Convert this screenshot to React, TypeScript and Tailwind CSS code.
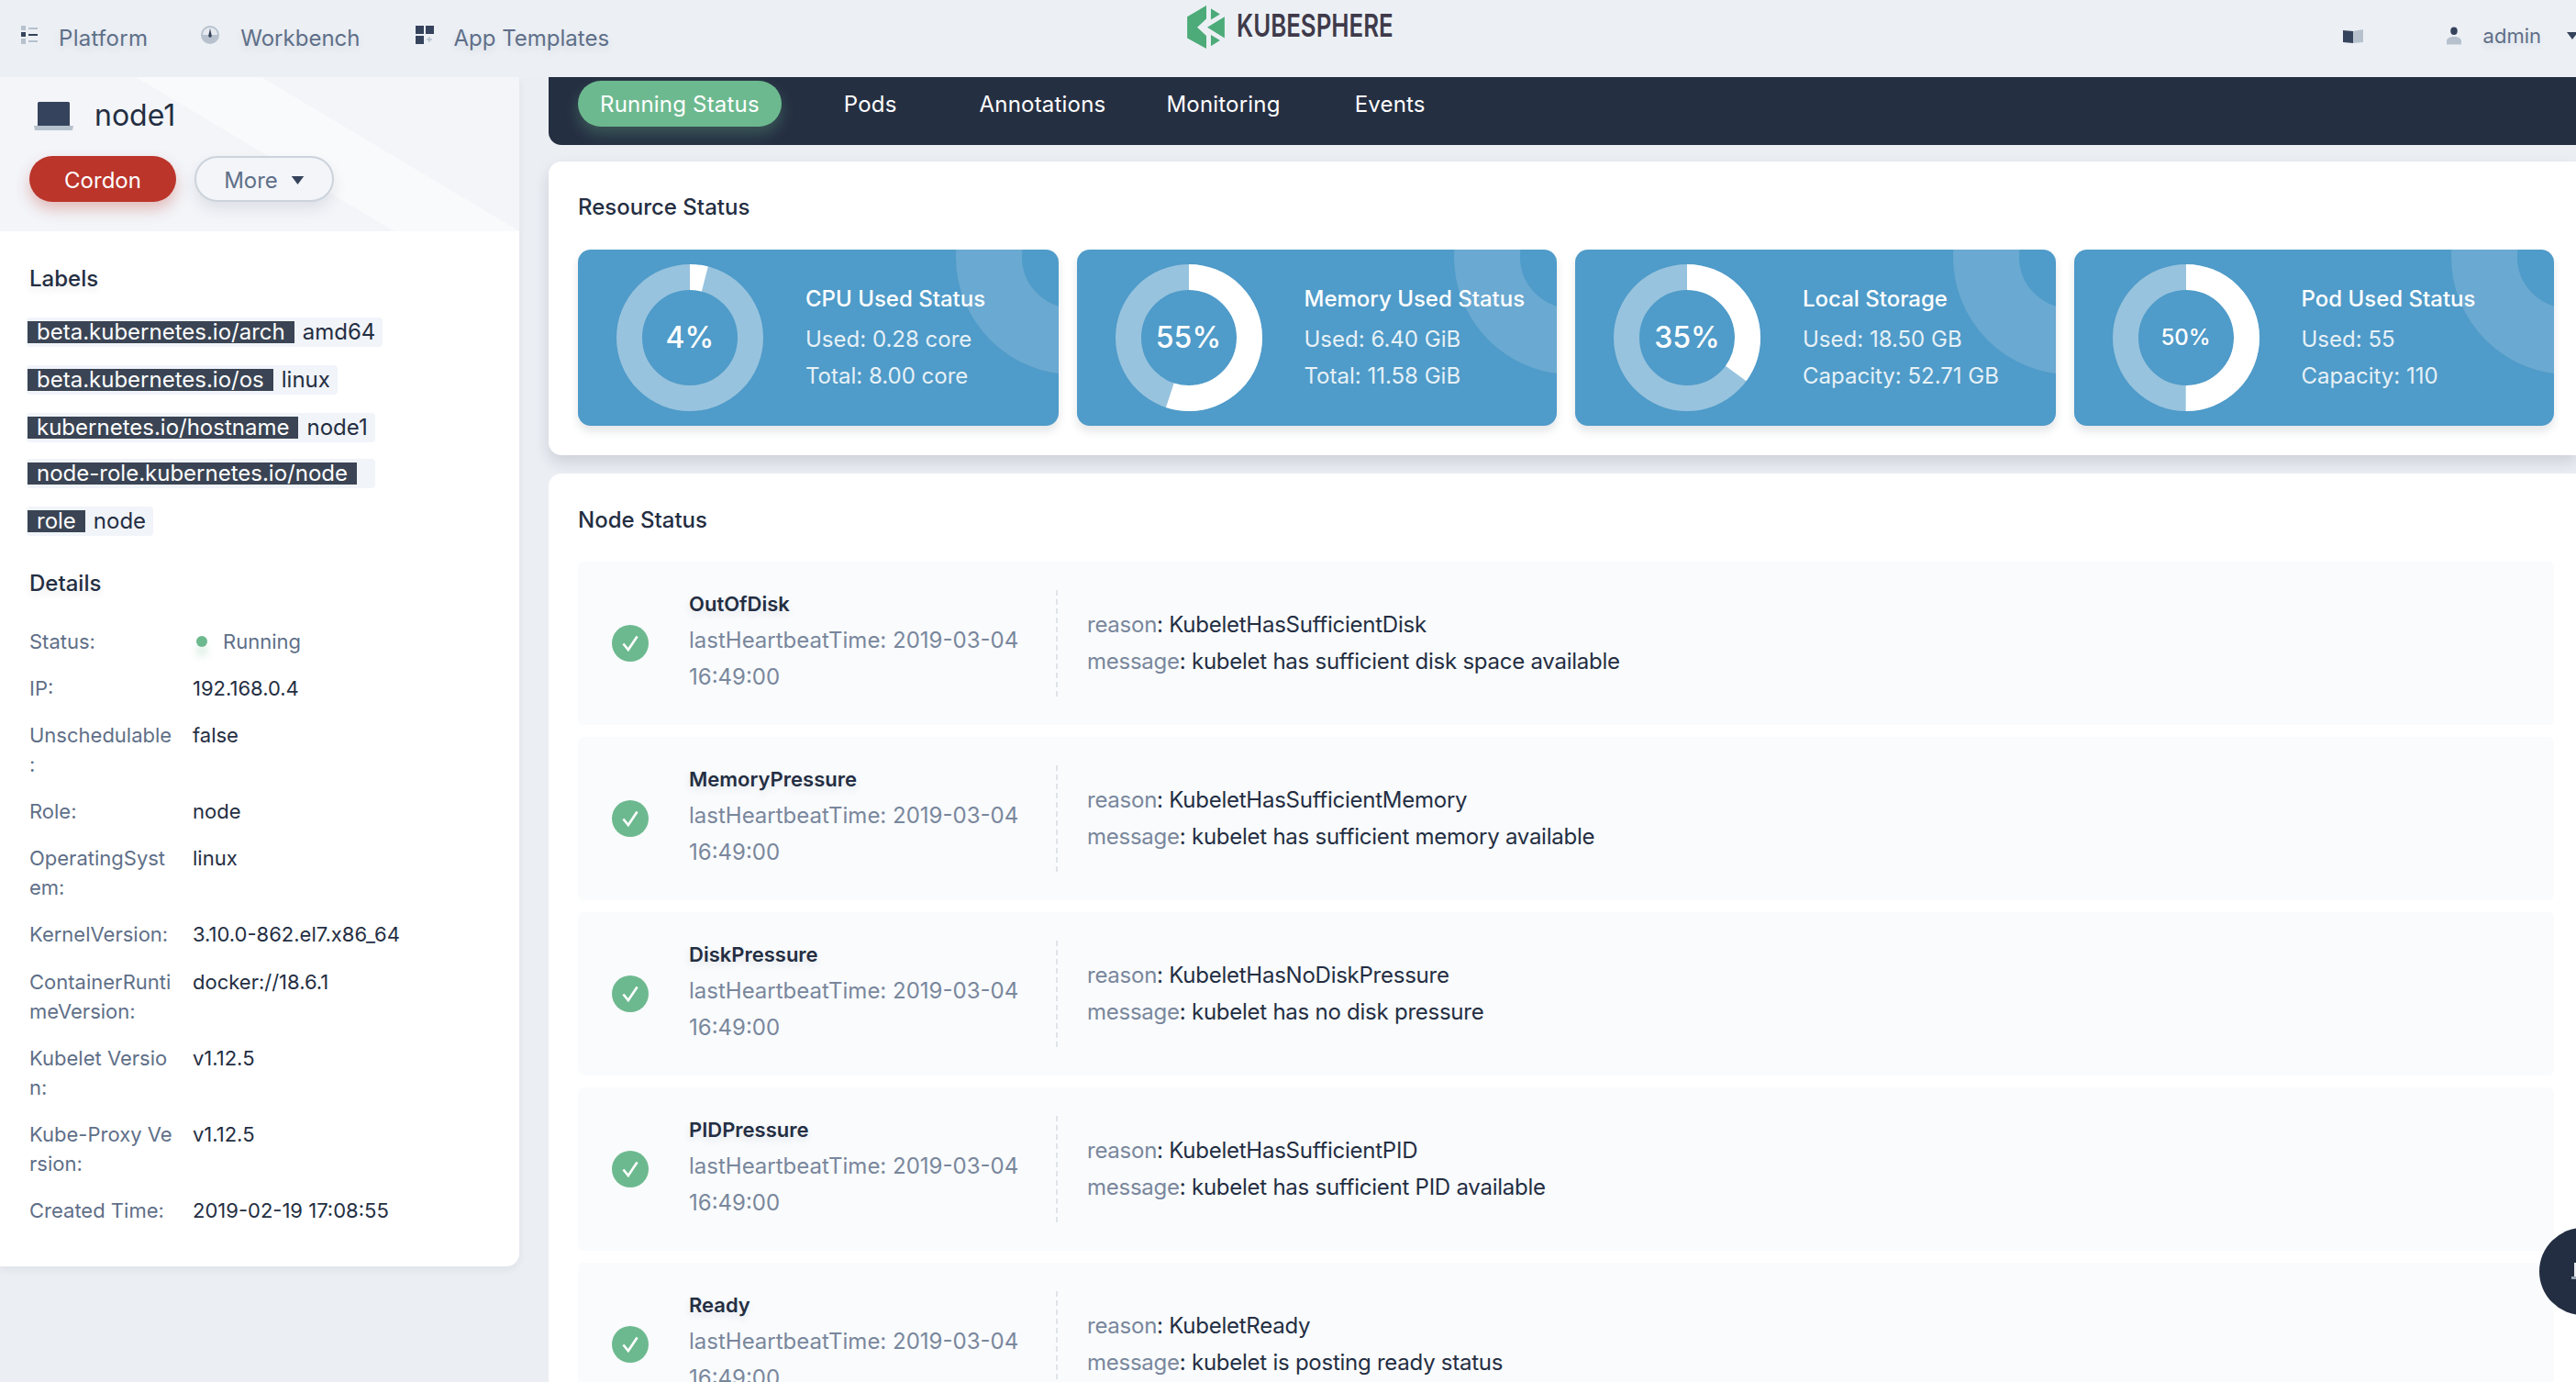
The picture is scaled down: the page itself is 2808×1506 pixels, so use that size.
import { Fragment, type ReactNode } from 'react';

const labels = [
  { k: 'beta.kubernetes.io/arch', v: 'amd64' },
  { k: 'beta.kubernetes.io/os', v: 'linux' },
  { k: 'kubernetes.io/hostname', v: 'node1' },
  { k: 'node-role.kubernetes.io/node', v: '' },
  { k: 'role', v: 'node' },
];

const details: { label: ReactNode; value: ReactNode }[] = [
  { label: 'Status:', value: <Running /> },
  { label: 'IP:', value: '192.168.0.4' },
  { label: <>Unschedulable<br />:</>, value: 'false' },
  { label: 'Role:', value: 'node' },
  { label: <>OperatingSyst<br />em:</>, value: 'linux' },
  { label: 'KernelVersion:', value: '3.10.0-862.el7.x86_64' },
  { label: <>ContainerRunti<br />meVersion:</>, value: 'docker://18.6.1' },
  { label: <>Kubelet Versio<br />n:</>, value: 'v1.12.5' },
  { label: <>Kube-Proxy Ve<br />rsion:</>, value: 'v1.12.5' },
  { label: 'Created Time:', value: '2019-02-19 17:08:55' },
];

const resources = [
  { pct: 4, text: '4%', title: 'CPU Used Status', a: 'Used: 0.28 core', b: 'Total: 8.00 core' },
  { pct: 55, text: '55%', title: 'Memory Used Status', a: 'Used: 6.40 GiB', b: 'Total: 11.58 GiB' },
  { pct: 35, text: '35%', title: 'Local Storage', a: 'Used: 18.50 GB', b: 'Capacity: 52.71 GB' },
  { pct: 50, text: '50%', title: 'Pod Used Status', a: 'Used: 55', b: 'Capacity: 110', small: true },
];

const conditions = [
  { name: 'OutOfDisk', reason: 'KubeletHasSufficientDisk', message: 'kubelet has sufficient disk space available' },
  { name: 'MemoryPressure', reason: 'KubeletHasSufficientMemory', message: 'kubelet has sufficient memory available' },
  { name: 'DiskPressure', reason: 'KubeletHasNoDiskPressure', message: 'kubelet has no disk pressure' },
  { name: 'PIDPressure', reason: 'KubeletHasSufficientPID', message: 'kubelet has sufficient PID available' },
  { name: 'Ready', reason: 'KubeletReady', message: 'kubelet is posting ready status' },
];

function Running() {
  return (
    <span className="flex items-center">
      <span className="ml-[4px] mr-[17px] h-[12px] w-[12px] rounded-full bg-[#6db98f] shadow-[0_10px_8px_rgba(109,185,143,0.25)]" />
      <span className="text-[#5f6f88]">Running</span>
    </span>
  );
}

function Caret({ className }: { className: string }) {
  return (
    <svg viewBox="0 0 12 8" className={className}>
      <path d="M0 0h12L6 8z" fill="currentColor" />
    </svg>
  );
}

function Laptop({ className }: { className: string }) {
  return (
    <svg viewBox="0 0 43 31" className={className}>
      <path d="M4 1.500A1.500 1.500 0 0 1 5.500 0h32A1.500 1.500 0 0 1 39 1.500V26H4z" fill="#36435c" />
      <path d="M0 26h43l-1 5H1z" fill="#b6c1cd" />
    </svg>
  );
}

function Donut({ pct, text, small }: { pct: number; text: string; small?: boolean }) {
  const r = 66;
  const c = 2 * Math.PI * r;
  return (
    <div className="relative h-[160px] w-[160px] shrink-0">
      <svg viewBox="0 0 160 160" className="h-full w-full -rotate-90">
        <circle cx="80" cy="80" r={r} fill="none" stroke="#97c3de" strokeWidth="28" />
        <circle cx="80" cy="80" r={r} fill="none" stroke="#ffffff" strokeWidth="28" strokeDasharray={`${(c * pct) / 100} ${c}`} />
      </svg>
      <div className={`absolute inset-0 flex items-center justify-center font-medium text-white ${small ? 'text-[24px]' : 'text-[32px]'}`}>
        {text}
      </div>
    </div>
  );
}

function ResourceCard({ pct, text, title, a, b, small }: (typeof resources)[number]) {
  return (
    <div className="relative flex h-[192px] items-center overflow-hidden rounded-[14px] bg-[#4f9bc9] pl-[42px] text-white shadow-[0_6px_10px_rgba(36,46,66,0.12)]">
      <div className="absolute -right-[144px] -top-[120px] h-[256px] w-[256px] rounded-full border-[72px] border-[#6aa9d1]" />
      <Donut pct={pct} text={text} small={small} />
      <div className="relative ml-[46px] text-[24px] leading-[40px]">
        <div className="mb-[4px] font-medium">{title}</div>
        <div className="text-[#e6f1f7]">{a}</div>
        <div className="text-[#e6f1f7]">{b}</div>
      </div>
    </div>
  );
}

function ConditionRow({ name, reason, message }: (typeof conditions)[number]) {
  return (
    <div className="flex h-[178px] shrink-0 items-center rounded-[6px] bg-[#f9fbfd] pl-[37px]">
      <div className="flex h-[40px] w-[40px] shrink-0 items-center justify-center rounded-full bg-[#6db98f]">
        <svg viewBox="0 0 24 24" className="h-[26px] w-[26px]" fill="none" stroke="#fff" strokeWidth="2.400">
          <path d="M5 12.500l5 6L19 5" />
        </svg>
      </div>
      <div className="-mt-[6px] ml-[44px] w-[400px] shrink-0 text-[24px] leading-[40px] text-[#79879c]">
        <div className="text-[22px] font-semibold text-[#242e42] [text-shadow:0_4px_8px_rgba(36,46,66,0.1)]">{name}</div>
        <div>lastHeartbeatTime: 2019-03-04</div>
        <div>16:49:00</div>
      </div>
      <div className="h-[116px] border-l-2 border-dashed border-[#dfe4ea]" />
      <div className="ml-[32px] text-[24px] leading-[40px] tracking-[-0.25px] text-[#242e42]">
        <div><span className="text-[#79879c]">reason</span>: {reason}</div>
        <div><span className="text-[#79879c]">message</span>: {message}</div>
      </div>
    </div>
  );
}

export default function App() {
  return (
    <div className="relative flex h-[1506px] flex-col overflow-hidden bg-[#ebeef3] font-['Inter',sans-serif] text-[#242e42]">
      {/* top nav */}
      <header className="relative flex h-[84px] shrink-0 items-center bg-[#ecf0f5] text-[24px] text-[#5f6f88] [text-shadow:0_4px_8px_rgba(36,46,66,0.1)]">
        <svg viewBox="0 0 18 20" className="-mt-[8px] ml-[23px] h-[20px] w-[18px]">
          <path d="M0 0h5v5H0zM0 14h5v6H0zM8 2h10v2H8zM8 16h10v2H8z" fill="#b6c1cd" />
          <path d="M0 7h5v5H0zM8 9h10v2H8z" fill="#36435c" />
        </svg>
        <span className="ml-[23px] tracking-[0.3px]">Platform</span>
        <svg viewBox="0 0 20 20" className="-mt-[8px] ml-[58px] h-[20px] w-[20px]">
          <circle cx="10" cy="10" r="10" fill="#b6c1cd" />
          <path d="M2 10a8 8 0 0 1 16 0z" fill="#e6eaef" />
          <path d="M10 3l1.800 8a1.800 1.800 0 0 1-3.600 0z" fill="#36435c" />
        </svg>
        <span className="ml-[23px]">Workbench</span>
        <svg viewBox="0 0 20 20" className="-mt-[8px] ml-[61px] h-[20px] w-[20px]">
          <path d="M0 0h9v9H0zM11 0h9v9h-9zM0 11h9v9H0z" fill="#36435c" />
          <path d="M15 12v6M12 15h6" stroke="#b6c1cd" strokeWidth="1.500" />
        </svg>
        <span className="ml-[21px]">App Templates</span>

        <div className="absolute left-[1294px] top-[6px] flex items-center [text-shadow:none]">
          <svg viewBox="27 18 123 142" className="h-[47px] w-[41px]">
            <path d="M27 55L90 18v44L60 90l30 28v42l-63-35z" fill="#4cab78" />
            <path d="M93 90l57-35v70z" fill="#4cab78" />
            <path d="M105 28l30 19-30 18zM105 115l30 18-30 19z" fill="#4cab78" />
          </svg>
          <span className="-mt-[3px] ml-[13px] origin-left scale-x-[0.76] text-[34px] leading-none font-semibold text-[#3f3a4a]">KUBESPHERE</span>
        </div>

        <div className="-mt-[6px] ml-auto flex items-center text-[22px]">
          <svg viewBox="0 0 22 15" className="h-[15px] w-[22px]">
            <path d="M0 1l11 1v13L0 14z" fill="#36435c" />
            <path d="M11 2l11-2v14l-11 1z" fill="#b6c1cd" />
          </svg>
          <svg viewBox="0 0 17 20" className="ml-[91px] h-[20px] w-[16px]">
            <ellipse cx="8.500" cy="4.500" rx="4" ry="4.500" fill="#36435c" />
            <path d="M0 20v-4c0-3 3.500-5 8.500-5s8.500 2 8.500 5v4z" fill="#b6c1cd" />
          </svg>
          <span className="ml-[24px]">admin</span>
          <Caret className="ml-[25px] -mr-[5px] h-[8px] w-[18px] text-[#36435c]" />
        </div>
      </header>

      <div className="flex min-h-0 flex-1">
        {/* left column */}
        <aside className="mr-[32px] h-[1296px] w-[566px] shrink-0 overflow-hidden rounded-br-[14px] bg-white shadow-[0_4px_8px_rgba(36,46,66,0.06)]">
          <div className="relative h-[168px] bg-[#f3f5f9] pl-[32px]">
            <svg viewBox="0 0 566 168" className="absolute inset-0 h-full w-full">
              <path d="M148 0h137l281 168H430z" fill="#f9fafc" />
            </svg>
            <div className="relative flex items-center pt-[24px]">
              <Laptop className="ml-[5px] h-[31px] w-[43px]" />
              <span className="ml-[23px] text-[32px] leading-[36px]">node1</span>
            </div>
            <div className="relative mt-[26px] flex gap-[20px] text-[24px]">
              <button className="h-[50px] w-[160px] rounded-[25px] bg-[#bb352a] pt-[3px] text-white shadow-[0_8px_16px_rgba(187,53,42,0.3)]">Cordon</button>
              <button className="flex h-[50px] w-[152px] items-center justify-center rounded-[25px] border-2 border-[#ccd3db] bg-[#f3f5f9] pt-[3px] text-[#5f6f88] shadow-[0_8px_16px_rgba(36,46,66,0.1)]">
                More
                <Caret className="ml-[14px] h-[9px] w-[15px] text-[#36435c]" />
              </button>
            </div>
          </div>

          <div className="px-[32px] pt-[36px] text-[24px] leading-[32px]">
            <h3 className="font-medium [text-shadow:0_4px_8px_rgba(36,46,66,0.1)]">Labels</h3>
            <div className="mt-[26px] flex flex-col items-start gap-[20px]">
              {labels.map((l, i) => (
                <div key={l.k} className={`-ml-[3px] flex h-[32px] items-center rounded-[4px] bg-[#f1f4f9] pl-[1px] pr-[8px] ${i === 3 ? '-mt-[2px]' : ''}`}>
                  <span className="flex h-[24px] items-center bg-[#3a4454] px-[10px] text-white">{l.k}</span>
                  {l.v ? <span className="ml-[9px]">{l.v}</span> : <span className="w-[12px]" />}
                </div>
              ))}
            </div>

            <h3 className="mt-[36px] font-medium [text-shadow:0_4px_8px_rgba(36,46,66,0.1)]">Details</h3>
            <div className="mt-[31px] grid grid-cols-[178px_1fr] gap-y-[19.1px] text-[22px]">
              {details.map((d, i) => (
                <Fragment key={i}>
                  <div className="text-[#5f6f88]">{d.label}</div>
                  <div>{d.value}</div>
                </Fragment>
              ))}
            </div>
          </div>
        </aside>

        {/* right column */}
        <main className="flex min-w-0 flex-1 flex-col">
          <nav className="flex h-[74px] shrink-0 rounded-bl-[14px] bg-[#252f42] pl-[32px] pt-[4px] text-[24px] tracking-[0.2px] text-white">
            <span className="flex h-[50px] items-center rounded-[25px] bg-[#6db98f] px-[24px] pt-[2px] shadow-[0_8px_16px_rgba(109,185,143,0.3)]">Running Status</span>
            <span className="ml-[68px] flex h-[50px] items-center pt-[2px]">Pods</span>
            <span className="ml-[90px] flex h-[50px] items-center pt-[2px]">Annotations</span>
            <span className="ml-[66px] flex h-[50px] items-center pt-[2px]">Monitoring</span>
            <span className="ml-[81px] flex h-[50px] items-center pt-[2px]">Events</span>
          </nav>

          <section className="mt-[18px] h-[320px] shrink-0 rounded-l-[14px] bg-white pl-[32px] pr-[24px] pt-[32px] shadow-[0_8px_16px_rgba(36,46,66,0.15)]">
            <h3 className="text-[24px] leading-[36px] font-medium">Resource Status</h3>
            <div className="mt-[28px] grid grid-cols-4 gap-[20px]">
              {resources.map((r) => (
                <ResourceCard key={r.title} {...r} />
              ))}
            </div>
          </section>

          <section className="mt-[20px] min-h-0 flex-1 rounded-tl-[14px] bg-white pl-[32px] pr-[24px] pt-[33px]">
            <h3 className="text-[24px] leading-[36px] font-medium">Node Status</h3>
            <div className="mt-[27px] flex flex-col gap-[13px]">
              {conditions.map((c) => (
                <ConditionRow key={c.name} {...c} />
              ))}
            </div>
          </section>
        </main>
      </div>

      {/* floating tool button */}
      <div className="absolute left-[2768px] top-[1338px] flex h-[95px] w-[95px] items-center rounded-full bg-[#242e42] pl-[35px]">
        <svg viewBox="0 0 26 19" className="h-[19px] w-[26px]">
          <path d="M3 0h20v15H3z" fill="#e8ebf0" />
          <path d="M0 15h26v3H0z" fill="#9aa5b4" />
        </svg>
      </div>
    </div>
  );
}
